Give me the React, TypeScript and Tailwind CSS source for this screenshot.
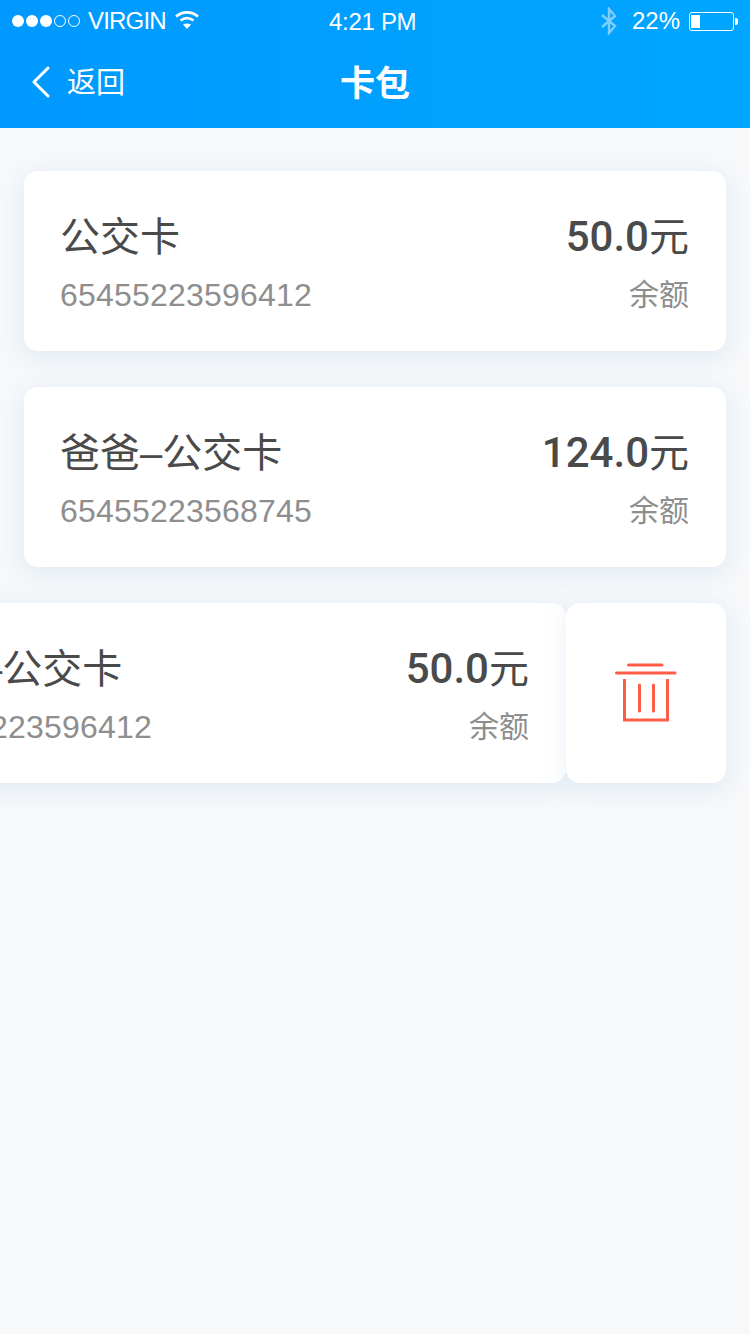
import React from "react";

const font = "font-['Liberation_Sans','Noto_Sans_CJK_SC',sans-serif]";

const Card = ({ name, no, amount, className = "" }: { name: string; no: string; amount: string; className?: string }) => (
  <div className={`h-[180px] bg-white rounded-[14px] shadow-[0_6px_24px_rgba(30,120,200,0.1)] pl-9 pr-[37px] pt-[40px] flex justify-between ${className}`}>
    <div className="flex flex-col">
      <span className="text-[40px] leading-[52px] text-[#4a4a4a]">{name}</span>
      <span className="text-[32px] leading-[38px] tracking-[0.2px] mt-[13px] text-[#8e8e8e]">{no}</span>
    </div>
    <div className="flex flex-col items-end">
      <span className="text-[40px] leading-[52px] text-[#4a4a4a]">
        <b className="font-['Roboto'] font-medium text-[42px]">{amount}</b>元
      </span>
      <span className="text-[30px] leading-[38px] mt-[13px] text-[#8e8e8e]">余额</span>
    </div>
  </div>
);

const Wifi = () => (
  <svg width="26" height="20" viewBox="0 0 26 20" fill="none" stroke="white" strokeWidth="2.6">
    <path d="M2 6.5C8.5 1 17.5 1 24 6.5" />
    <path d="M6.5 10.5C10.5 7.5 15.5 7.5 19.5 10.5" />
    <path d="M13 19L9 14.5C11.5 13 14.5 13 17 14.5Z" fill="white" stroke="none" />
  </svg>
);

const Bluetooth = () => (
  <svg width="18" height="28" viewBox="0 0 18 28" fill="none" stroke="#7fcdfb" strokeWidth="2.4">
    <path d="M2 8L15 19L9 26V2L15 9L2 20" />
  </svg>
);

const Trash = () => (
  <svg width="62" height="60" viewBox="0 0 62 60" fill="none" stroke="#ff5c47" strokeWidth="3" strokeLinecap="round">
    <path d="M13.5 2H47" />
    <path d="M1.5 10H60" />
    <path d="M9.5 16V57H52.5V16" strokeLinecap="butt" />
    <path d="M24.5 22V48" />
    <path d="M38.5 22V48" />
  </svg>
);

export default function App() {
  return (
    <div className={`w-[750px] min-h-[1334px] bg-[#f6f8fa] overflow-hidden ${font}`}>
      <header className="h-[128px] bg-gradient-to-r from-[#0099ff] to-[#00a6ff] text-white">
        <div className="h-[40px] px-3 pt-[2px] flex items-center justify-between relative">
          <div className="flex items-center">
            <div className="flex items-center gap-[2px]">
              <span className="w-[12px] h-[12px] rounded-full bg-white" />
              <span className="w-[12px] h-[12px] rounded-full bg-white" />
              <span className="w-[12px] h-[12px] rounded-full bg-white" />
              <span className="w-[12px] h-[12px] rounded-full border border-white" />
              <span className="w-[12px] h-[12px] rounded-full border border-white" />
            </div>
            <span className="text-[24px] leading-none tracking-[-0.8px] ml-2">VIRGIN</span>
            <span className="ml-[8px] -mt-[2px]"><Wifi /></span>
          </div>
          <span className="absolute left-[329px] top-[9px] text-[24px] leading-[26px] tracking-[-0.3px]">4:21 PM</span>
          <div className="flex items-center">
            <Bluetooth />
            <span className="text-[24px] leading-none ml-[14px]">22%</span>
            <div className="ml-[9px] w-[45px] h-[19px] border border-white rounded-[3px] py-[2px] pl-[1px]">
              <div className="w-[9px] h-full bg-white" />
            </div>
            <div className="w-[3px] h-[7px] bg-white rounded-r-[2px] ml-[1px]" />
          </div>
        </div>
        <div className="h-[88px] flex items-center relative">
          <svg className="ml-[32px] -mt-[5px]" width="18" height="32" viewBox="0 0 18 32" fill="none" stroke="white" strokeWidth="3" strokeLinecap="round" strokeLinejoin="round">
            <path d="M16 2L2 16L16 30" />
          </svg>
          <span className="ml-[17px] text-[29px]">返回</span>
          <span className="absolute inset-x-0 text-center text-[35px] font-bold">卡包</span>
        </div>
      </header>
      <main className="px-6 pt-[43px] flex flex-col gap-9">
        <Card name="公交卡" no="65455223596412" amount="50.0" />
        <Card name="爸爸–公交卡" no="65455223568745" amount="124.0" />
        <div className="flex">
          <Card name="爸爸–公交卡" no="65455223596412" amount="50.0" className="w-[702px] shrink-0 -ml-[160px]" />
          <div className="w-[160px] shrink-0 h-[180px] bg-white rounded-[14px] shadow-[0_6px_24px_rgba(30,120,200,0.1)] flex items-center justify-center">
            <Trash />
          </div>
        </div>
      </main>
    </div>
  );
}
